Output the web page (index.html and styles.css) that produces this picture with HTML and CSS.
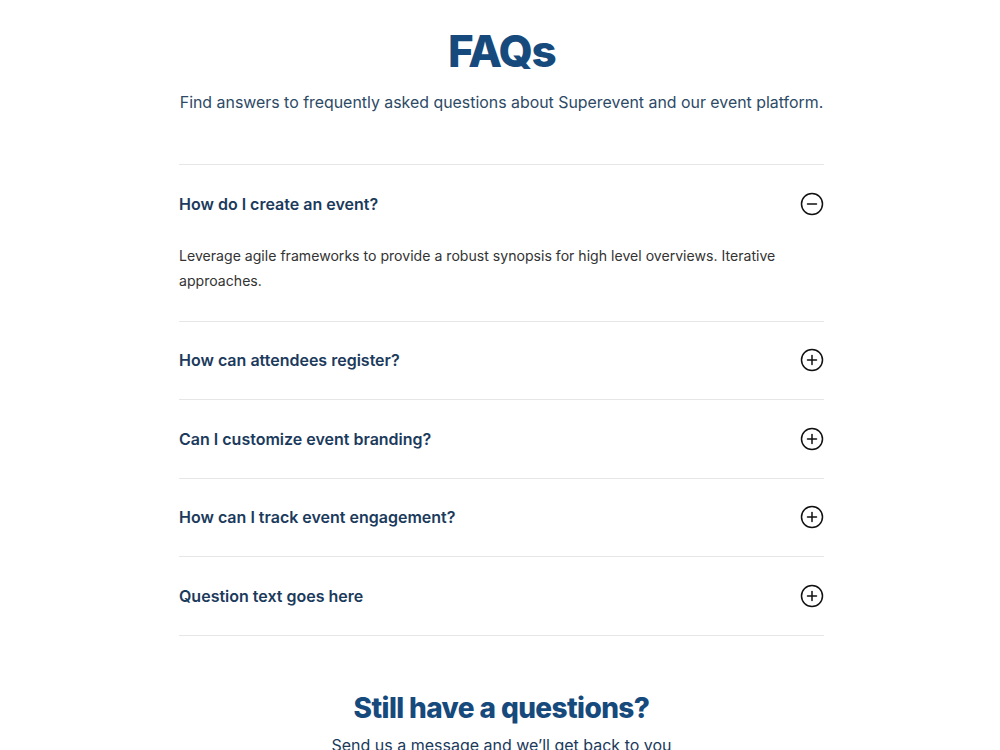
FILE: index.html
```html
<!DOCTYPE html>
<html lang="en">
<head>
  <meta charset="UTF-8">
  <meta name="viewport" content="width=device-width, initial-scale=1.0">
  <title>FAQs - Superevent</title>
  <link rel="stylesheet" href="styles.css">
</head>
<body>
  <section class="faq">
    <header class="faq-header">
      <h1>FAQs</h1>
      <p>Find answers to frequently asked questions about Superevent and our event platform.</p>
    </header>

    <div class="faq-list">
      <div class="faq-item open">
        <div class="faq-question">
          <span>How do I create an event?</span>
          <svg class="faq-icon" viewBox="0 0 24 24" width="24" height="24">
            <circle cx="12" cy="12" r="10.5" />
            <line x1="7.5" y1="12" x2="16.5" y2="12" />
          </svg>
        </div>
        <div class="faq-answer">
          Leverage agile frameworks to provide a robust synopsis for high level overviews. Iterative approaches.
        </div>
      </div>

      <div class="faq-item">
        <div class="faq-question">
          <span>How can attendees register?</span>
          <svg class="faq-icon" viewBox="0 0 24 24" width="24" height="24">
            <circle cx="12" cy="12" r="10.5" />
            <line x1="7.5" y1="12" x2="16.5" y2="12" />
            <line x1="12" y1="7.5" x2="12" y2="16.5" />
          </svg>
        </div>
      </div>

      <div class="faq-item">
        <div class="faq-question">
          <span>Can I customize event branding?</span>
          <svg class="faq-icon" viewBox="0 0 24 24" width="24" height="24">
            <circle cx="12" cy="12" r="10.5" />
            <line x1="7.5" y1="12" x2="16.5" y2="12" />
            <line x1="12" y1="7.5" x2="12" y2="16.5" />
          </svg>
        </div>
      </div>

      <div class="faq-item">
        <div class="faq-question">
          <span>How can I track event engagement?</span>
          <svg class="faq-icon" viewBox="0 0 24 24" width="24" height="24">
            <circle cx="12" cy="12" r="10.5" />
            <line x1="7.5" y1="12" x2="16.5" y2="12" />
            <line x1="12" y1="7.5" x2="12" y2="16.5" />
          </svg>
        </div>
      </div>

      <div class="faq-item">
        <div class="faq-question">
          <span>Question text goes here</span>
          <svg class="faq-icon" viewBox="0 0 24 24" width="24" height="24">
            <circle cx="12" cy="12" r="10.5" />
            <line x1="7.5" y1="12" x2="16.5" y2="12" />
            <line x1="12" y1="7.5" x2="12" y2="16.5" />
          </svg>
        </div>
      </div>
    </div>

    <div class="faq-contact">
      <h2>Still have a questions?</h2>
      <p>Send us a message and we’ll get back to you</p>
    </div>
  </section>
</body>
</html>
```

FILE: styles.css
```css
:root {
  --azul-titulo: #174a7c;
  --azul-pergunta: #1b3a5c;
  --texto: #333;
  --linha: #e6e6e6;
}

body {
  margin: 0;
  padding-left: 3px;
  background: #fff;
  font-family: 'Inter', 'Liberation Sans', sans-serif;
  color: var(--texto);
}

.faq {
  width: 645px;
  margin: 0 auto;
  padding-top: 26px;
}

.faq-header {
  text-align: center;
}

.faq-header h1 {
  margin: 0;
  font-size: 44px;
  line-height: 50px;
  font-weight: 800;
  letter-spacing: -1.5px;
  color: var(--azul-titulo);
}

.faq-header p {
  margin: 15px -10px 0;
  font-size: 15.9px;
  line-height: 24px;
  white-space: nowrap;
  color: #2d4a66;
}

.faq-list {
  margin-top: 49px;
  border-top: 1px solid var(--linha);
}

.faq-item {
  border-bottom: 1px solid var(--linha);
}

.faq-question {
  display: flex;
  justify-content: space-between;
  align-items: center;
  height: 77.5px;
  font-size: 16px;
  font-weight: 600;
  color: var(--azul-pergunta);
}

.faq-icon {
  fill: none;
  stroke: #111;
  stroke-width: 1.5;
  stroke-linecap: round;
}

.faq-answer {
  padding: 0 20px 28px 0;
  font-size: 14.1px;
  line-height: 25px;
  color: var(--texto);
}

.faq-contact {
  text-align: center;
  margin-top: 52px;
}

.faq-contact h2 {
  margin: 0;
  font-size: 28px;
  line-height: 40px;
  font-weight: 800;
  letter-spacing: -0.6px;
  color: var(--azul-titulo);
}

.faq-contact p {
  margin: 5px 0 0;
  font-size: 16px;
  line-height: 24px;
  color: var(--azul-pergunta);
}
```
